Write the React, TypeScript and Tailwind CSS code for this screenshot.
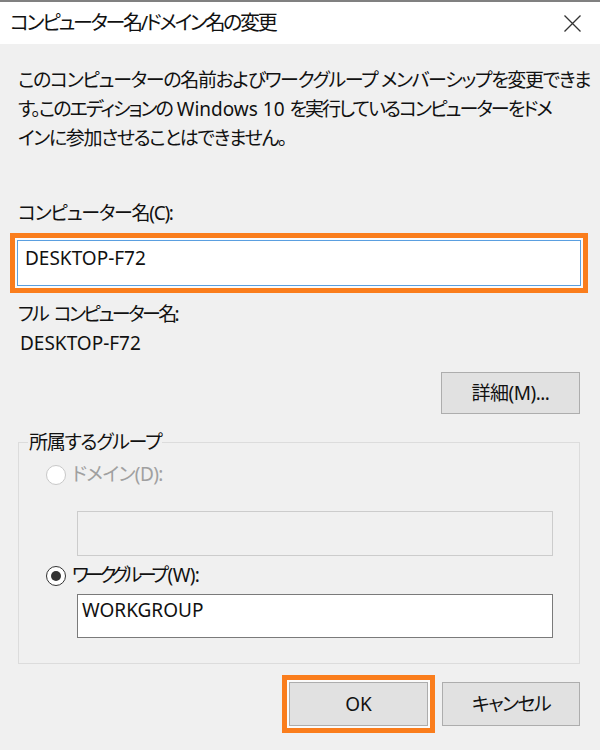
import React from "react";

const font =
  "font-['Noto_Sans','Noto_Sans_CJK_JP',sans-serif] [font-feature-settings:'palt']";

function Radio({ checked, disabled }: { checked?: boolean; disabled?: boolean }) {
  return (
    <span
      className={
        "flex h-[20px] w-[20px] shrink-0 items-center justify-center rounded-full border bg-white " +
        (disabled ? "border-[#c8c8c8]" : "border-[#333333]")
      }
    >
      {checked ? <span className="h-[10px] w-[10px] rounded-full bg-[#333333]" /> : null}
    </span>
  );
}

export default function App() {
  return (
    <div className={"flex h-[750px] w-[600px] flex-col bg-[#f0f0f0] text-[19px] text-[#111111] " + font}>
      <div className="h-[2px] bg-[#808080]" />
      <div className="flex h-[42px] items-center justify-between bg-white pl-[10px] pr-[19px]">
        <span className="whitespace-nowrap text-[20px] leading-[28px] tracking-[-2.3px]">
          コンピューター名/ドメイン名の変更
        </span>
        <svg width="17" height="17" viewBox="0 0 17 17" className="shrink-0">
          <path d="M0.5 0.5 L16.5 16.5 M16.5 0.5 L0.5 16.5" stroke="#333333" strokeWidth="1.3" fill="none" />
        </svg>
      </div>

      <div className="flex flex-col pl-[18px] pr-[20px] pt-[22px]">
        <div className="whitespace-nowrap leading-[29px] tracking-[-1.35px]">
          <div>このコンピューターの名前およびワークグループ メンバーシップを変更できま</div>
          <div className="tracking-[-2px]">
            す。このエディションの<span className="tracking-normal"> Windows 10 </span>を実行しているコンピューターをドメ
          </div>
          <div>インに参加させることはできません。</div>
        </div>

        <div className="mt-[46px] whitespace-nowrap leading-[29px] tracking-[-1.3px]">コンピューター名(C):</div>

        <div className="ml-[-8px] mt-[5px] h-[60px] w-[578px] border-[5px] border-[#fa7d1c] bg-[#fbfbfb] p-[2px]">
          <div className="h-full border border-[#5a9fe0] bg-white pl-[7px] pt-[4px] leading-[26px]">
            DESKTOP-F72
          </div>
        </div>

        <div className="mt-[7px] flex whitespace-nowrap leading-[29px]">
          <span className="tracking-[-2px]">フル</span>
          <span className="ml-[6px] tracking-[-2.6px]">コンピューター名:</span>
        </div>
        <div className="pl-[2px] leading-[29px]">DESKTOP-F72</div>

        <div className="mt-[14px] flex justify-end">
          <div className="flex h-[42px] w-[139px] items-center justify-center border border-[#adadad] bg-[#e1e1e1] tracking-[-0.5px]">
            詳細(M)...
          </div>
        </div>

        <fieldset className="mt-[14px] w-[562px] border border-[#dcdcdc] pb-[25px]">
          <legend className="ml-[9px] whitespace-nowrap px-[1px] leading-[29px] tracking-[-1.25px]">所属するグループ</legend>
          <div className="ml-[27px] mt-[3px] flex h-[29px] items-center gap-[6px] text-[#a0a0a0]">
            <Radio disabled />
            <span className="whitespace-nowrap tracking-[-0.6px]">ドメイン(D):</span>
          </div>
          <div className="ml-[58px] mt-[22px] h-[45px] w-[476px] border border-[#cccccc] bg-[#f0f0f0]" />
          <div className="ml-[27px] mt-[5px] flex h-[29px] items-center gap-[6px]">
            <Radio checked />
            <span className="whitespace-nowrap">
              <span className="tracking-[-4.2px]">ワークグループ</span>
              <span className="ml-[3px] tracking-[-0.6px]">(W):</span>
            </span>
          </div>
          <div className="ml-[58px] mt-[4px] h-[44px] w-[476px] border border-[#7a7a7a] bg-white pl-[4px] pt-[2px] leading-[26px]">
            WORKGROUP
          </div>
        </fieldset>

        <div className="mt-[11px] flex items-center justify-end gap-[7px]">
          <div className="h-[58px] w-[153px] border-[5px] border-[#fa7d1c] bg-[#fbfbfb] p-[2px]">
            <div className="flex h-full items-center justify-center border border-[#adadad] bg-[#e1e1e1]">
              OK
            </div>
          </div>
          <div className="flex h-[44px] w-[138px] items-center justify-center border border-[#adadad] bg-[#e1e1e1] tracking-[-1.6px]">
            キャンセル
          </div>
        </div>
      </div>
    </div>
  );
}
